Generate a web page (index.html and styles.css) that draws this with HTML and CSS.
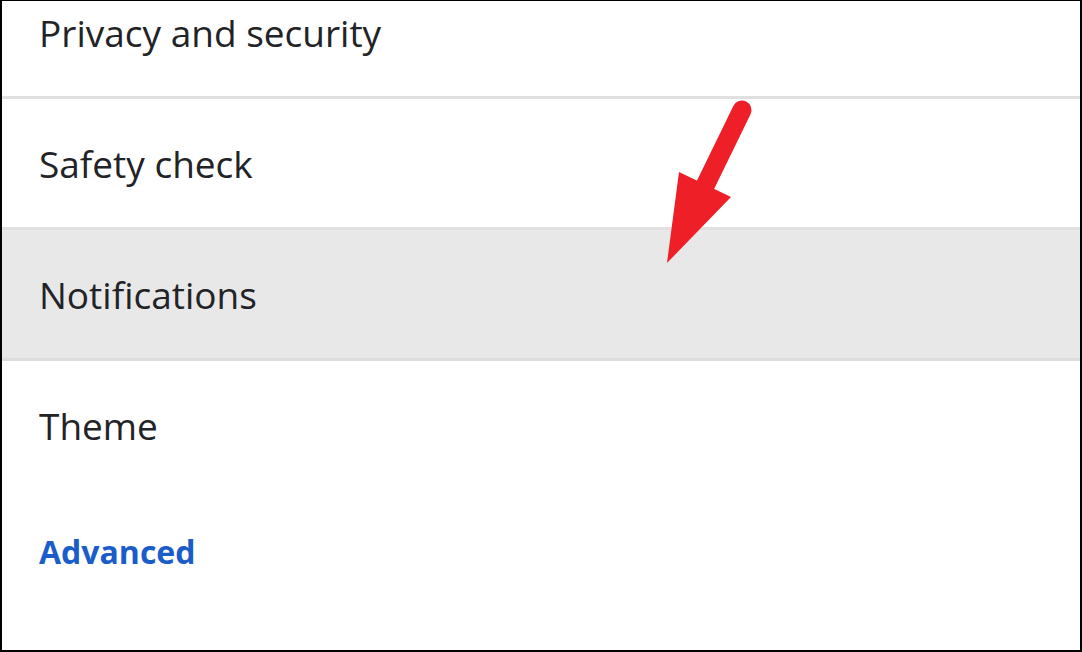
FILE: index.html
```html
<!DOCTYPE html>
<html>
<head>
<meta charset="utf-8">
<link rel="stylesheet" href="styles.css">
</head>
<body>
<div class="frame">
  <div class="list">
    <div class="row">Privacy and security</div>
    <div class="row">Safety check</div>
    <div class="row row-active">Notifications</div>
    <div class="row row-plain">Theme</div>
    <div class="advanced">Advanced</div>
  </div>
  <svg class="arrow" width="1082" height="652" viewBox="0 0 1082 652">
    <line x1="742" y1="110" x2="703" y2="190" stroke="#ee1f27" stroke-width="19" stroke-linecap="round"/>
    <polygon points="679,172 731,197 667,263" fill="#ee1f27"/>
  </svg>
</div>
</body>
</html>
```
FILE: styles.css
```css
html, body {
  margin: 0;
  padding: 0;
  background: #fff;
}
.frame {
  position: relative;
  width: 1082px;
  height: 652px;
  box-sizing: border-box;
  border-left: 2px solid #000;
  border-top: 1px solid #000;
  border-right: 2px solid #000;
  border-bottom: 2px solid #000;
  overflow: hidden;
  font-family: "Open Sans", "Noto Sans", sans-serif;
}
.list {
  display: flex;
  flex-direction: column;
  margin-top: -33px;
}
.row {
  height: 128px;
  display: flex;
  align-items: center;
  padding-left: 37px;
  font-size: 37px;
  color: #222326;
  border-bottom: 3px solid #e0e0e0;
}
.row-active {
  background: #e8e8e8;
  border-bottom-color: #dcdcdc;
}
.row-plain {
  border-bottom: none;
}
.advanced {
  padding-left: 37px;
  margin-top: 41px;
  font-size: 32px;
  font-weight: 700;
  color: #1a5dc8;
}
.arrow {
  position: absolute;
  left: -2px;
  top: -1px;
}
```
